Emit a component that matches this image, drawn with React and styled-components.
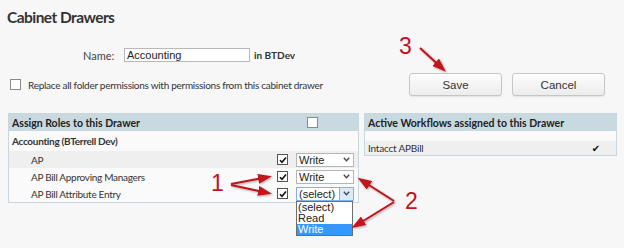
import React from "react";
import styled, { createGlobalStyle } from "styled-components";

const GlobalStyle = createGlobalStyle`
  html, body {
    margin: 0;
    padding: 0;
    background: #f7f7f7;
  }
  body {
    font-family: Lato, "Open Sans", sans-serif;
    color: #333;
  }
`;

const roles = [
  { name: "AP", value: "Write", shade: true },
  { name: "AP Bill Approving Managers", value: "Write" },
  { name: "AP Bill Attribute Entry", value: "(select)", open: true },
];

const Check = ({ checked }) => (
  <Box>
    {checked && (
      <svg width="8" height="8" viewBox="0 0 8 8">
        <path d="M1 4.2 L3 6.3 L7 1.5" fill="none" stroke="#111" strokeWidth="1.6" />
      </svg>
    )}
  </Box>
);

const Chevron = () => (
  <svg width="7" height="5" viewBox="0 0 7 5">
    <path d="M0.8 0.8 L3.5 3.8 L6.2 0.8" fill="none" stroke="#444" strokeWidth="1.3" />
  </svg>
);

const Annotations = () => (
  <Overlay width="624" height="248" viewBox="0 0 624 248">
    <defs>
      <marker id="head" markerWidth="7" markerHeight="5" refX="5" refY="2.5" orient="auto" markerUnits="strokeWidth">
        <path d="M0 0 L7 2.5 L0 5 Z" fill="#c1121f" />
      </marker>
      <filter id="shadow" x="-20%" y="-20%" width="140%" height="140%">
        <feDropShadow dx="1" dy="1" stdDeviation="0.8" floodColor="#000" floodOpacity="0.35" />
      </filter>
    </defs>
    <g stroke="#c1121f" strokeWidth="2" fill="none" markerEnd="url(#head)" filter="url(#shadow)">
      <line x1="420" y1="48" x2="443" y2="69" />
      <line x1="231" y1="184" x2="268" y2="177" />
      <line x1="231" y1="185" x2="268" y2="193" />
      <line x1="394" y1="201" x2="361" y2="180" />
      <line x1="394" y1="202" x2="355" y2="226" />
    </g>
    <g fill="#c1121f" fontFamily="'Liberation Sans', Arial, sans-serif" fontSize="23">
      <text x="399" y="54">3</text>
      <text x="211" y="191">1</text>
      <text x="405" y="209">2</text>
    </g>
  </Overlay>
);

export default function App() {
  return (
    <Page>
      <GlobalStyle />
      <Title>Cabinet Drawers</Title>
      <NameRow>
        <NameLabel>Name:</NameLabel>
        <NameInput>Accounting</NameInput>
        <Domain>in BTDev</Domain>
      </NameRow>
      <OptionRow>
        <ReplaceLabel>
          <Box $plain />
          Replace all folder permissions with permissions from this cabinet drawer
        </ReplaceLabel>
        <Buttons>
          <Button>Save</Button>
          <Button>Cancel</Button>
        </Buttons>
      </OptionRow>
      <Panels>
        <Panel $width={351}>
          <PanelHeader>
            Assign Roles to this Drawer
            <HeaderCheck>
              <Box $plain />
            </HeaderCheck>
          </PanelHeader>
          <GroupRow>Accounting (BTerrell Dev)</GroupRow>
          {roles.map((r) => (
            <RoleRow key={r.name} $shade={r.shade}>
              <RoleName>{r.name}</RoleName>
              <Check checked />
              <SelectWrap>
                <Select $open={r.open}>
                  <span>{r.value}</span>
                  <Arrow $open={r.open}>
                    <Chevron />
                  </Arrow>
                </Select>
                {r.open && (
                  <Options>
                    <Option>(select)</Option>
                    <Option>Read</Option>
                    <Option $active>Write</Option>
                  </Options>
                )}
              </SelectWrap>
            </RoleRow>
          ))}
        </Panel>
        <Panel $width={253}>
          <PanelHeader>Active Workflows assigned to this Drawer</PanelHeader>
          <Spacer />
          <WorkflowRow>
            Intacct APBill
            <Tick>✔</Tick>
          </WorkflowRow>
        </Panel>
      </Panels>
      <Annotations />
    </Page>
  );
}

const Page = styled.div`
  position: relative;
  width: 624px;
  height: 248px;
  box-sizing: border-box;
  padding: 7px 7px 0 8px;
  overflow: hidden;
`;

const Title = styled.h1`
  margin: 0 0 0 -1px;
  height: 30px;
  font-size: 15.5px;
  line-height: 20px;
  font-weight: 700;
  letter-spacing: -0.55px;
  color: #333;
`;

const NameRow = styled.div`
  display: flex;
  align-items: center;
  height: 36px;
  padding-left: 75px;
  font-size: 11px;
`;

const NameLabel = styled.span`
  width: 41px;
  color: #444;
`;

const NameInput = styled.div`
  width: 120px;
  height: 12px;
  line-height: 12px;
  padding: 0 2px;
  border: 1px solid #b9b9b9;
  background: #fff;
  font-family: "Liberation Sans", Arial, sans-serif;
  font-size: 11px;
  color: #222;
`;

const Domain = styled.span`
  margin-left: 4px;
  font-weight: 700;
  font-size: 10px;
`;

const OptionRow = styled.div`
  display: flex;
  align-items: center;
  justify-content: space-between;
  height: 23px;
  padding-right: 12px;
  margin-bottom: 17px;
`;

const ReplaceLabel = styled.label`
  display: flex;
  align-items: center;
  gap: 7px;
  padding-left: 2px;
  font-size: 10px;
  letter-spacing: -0.28px;
  color: #333;
`;

const Box = styled.span`
  display: inline-flex;
  align-items: center;
  justify-content: center;
  width: 9px;
  height: 9px;
  flex: none;
  border: 1px solid ${(p) => (p.$plain ? "#8a8a8a" : "#555")};
  background: #fff;
`;

const Buttons = styled.div`
  display: flex;
  gap: 10px;
`;

const Button = styled.button`
  width: 93px;
  height: 23px;
  border: 1px solid #c6c6c6;
  border-radius: 3px;
  background: linear-gradient(#fdfdfd, #ececec);
  box-shadow: 0 1px 1px rgba(0, 0, 0, 0.08);
  font-family: "Liberation Sans", Arial, sans-serif;
  font-size: 11.5px;
  color: #333;
`;

const Panels = styled.div`
  display: flex;
  align-items: flex-start;
  gap: 5px;
`;

const Panel = styled.div`
  width: ${(p) => p.$width}px;
  box-sizing: border-box;
  border: 1px solid #c8d7de;
  background: #fafafa;
`;

const PanelHeader = styled.div`
  display: flex;
  align-items: center;
  height: 17px;
  padding-left: 3px;
  background: #c9d9e0;
  font-size: 10.5px;
  font-weight: 700;
  color: #222;
`;

const HeaderCheck = styled.span`
  display: flex;
  margin-left: auto;
  margin-right: 40px;
`;

const GroupRow = styled.div`
  display: flex;
  align-items: center;
  height: 20px;
  padding-left: 3px;
  font-size: 10px;
  font-weight: 700;
  letter-spacing: -0.3px;
`;

const RoleRow = styled.div`
  display: flex;
  align-items: center;
  height: 17px;
  padding: 0 4px 0 22px;
  background: ${(p) => (p.$shade ? "#efefef" : "#fafafa")};
  font-size: 10px;
  letter-spacing: -0.3px;
`;

const RoleName = styled.span`
  flex: 1;
`;

const SelectWrap = styled.div`
  position: relative;
  margin-left: 8px;
  letter-spacing: 0;
`;

const Select = styled.div`
  display: flex;
  align-items: center;
  justify-content: space-between;
  width: 58px;
  height: 14px;
  box-sizing: border-box;
  padding-left: 2px;
  border: 1px solid ${(p) => (p.$open ? "#7eb4ea" : "#b5b5b5")};
  background: #fff;
  font-family: "Liberation Sans", Arial, sans-serif;
  font-size: 11px;
  color: #222;
`;

const Arrow = styled.span`
  display: flex;
  align-items: center;
  justify-content: center;
  width: 13px;
  height: 12px;
  background: ${(p) => (p.$open ? "#d7ebfb" : "transparent")};
  border-left: 1px solid ${(p) => (p.$open ? "#7eb4ea" : "transparent")};
`;

const Options = styled.div`
  position: absolute;
  top: 14px;
  left: 0;
  width: 57px;
  box-sizing: border-box;
  border: 1px solid #6d6d6d;
  background: #fff;
  z-index: 2;
`;

const Option = styled.div`
  height: 11px;
  line-height: 11px;
  padding-left: 1px;
  font-family: "Liberation Sans", Arial, sans-serif;
  font-size: 11px;
  background: ${(p) => (p.$active ? "#3399ff" : "#fff")};
  color: ${(p) => (p.$active ? "#fff" : "#222")};
`;

const Spacer = styled.div`
  height: 10px;
  background: #fafafa;
`;

const WorkflowRow = styled.div`
  display: flex;
  align-items: center;
  justify-content: space-between;
  height: 14px;
  padding: 0 16px 0 3px;
  background: #efefef;
  font-size: 10px;
  letter-spacing: -0.2px;
`;

const Tick = styled.span`
  font-family: "DejaVu Sans", sans-serif;
  font-size: 10px;
  color: #111;
`;

const Overlay = styled.svg`
  position: absolute;
  top: 0;
  left: 0;
  pointer-events: none;
  z-index: 5;
`;
